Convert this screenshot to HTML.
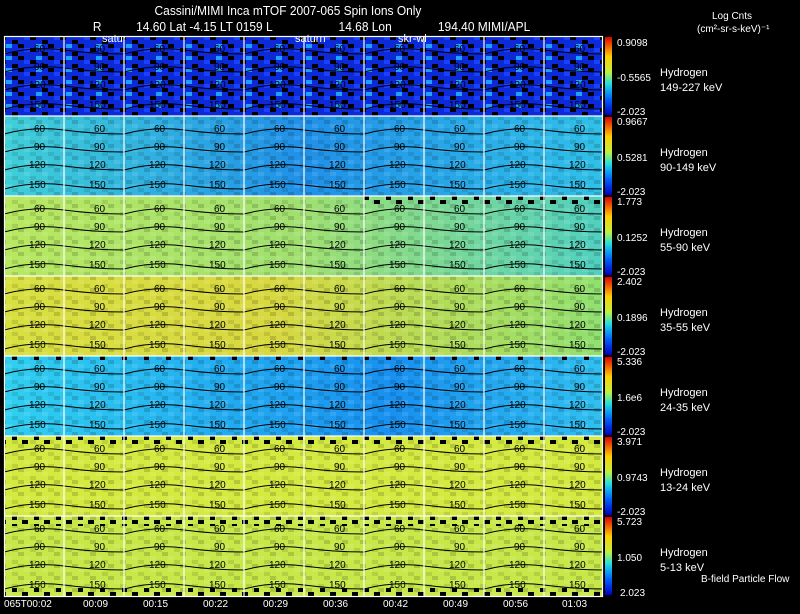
<!DOCTYPE html>
<html><head><meta charset="utf-8"><style>
body{margin:0;background:#000;width:800px;height:609px;overflow:hidden;font-family:"Liberation Sans",sans-serif}
</style></head><body>
<svg width="800" height="609" xmlns="http://www.w3.org/2000/svg" font-family="Liberation Sans, sans-serif">
<defs>
<linearGradient id="cb" x1="0" y1="0" x2="0" y2="1">
<stop offset="0" stop-color="#e00000"/><stop offset="0.25" stop-color="#ffd000"/><stop offset="0.45" stop-color="#c0f040"/><stop offset="0.6" stop-color="#20e0e0"/><stop offset="0.8" stop-color="#0060ff"/><stop offset="1" stop-color="#0000c0"/>
</linearGradient>
<linearGradient id="g3" x1="0" x2="1"><stop offset="0" stop-color="#b8e860"/><stop offset="0.5" stop-color="#a0e070"/><stop offset="1" stop-color="#50d0c0"/></linearGradient>
<linearGradient id="g4" x1="0" x2="1"><stop offset="0" stop-color="#d8e040"/><stop offset="0.45" stop-color="#d8d840"/><stop offset="1" stop-color="#90e070"/></linearGradient>
<linearGradient id="g2" x1="0" x2="1"><stop offset="0" stop-color="#40d0d8"/><stop offset="0.5" stop-color="#2090e8"/><stop offset="1" stop-color="#30c0e8"/></linearGradient>
<linearGradient id="g5" x1="0" x2="1"><stop offset="0" stop-color="#30d0f0"/><stop offset="0.65" stop-color="#1890f0"/><stop offset="1" stop-color="#30c0f0"/></linearGradient>
<pattern id="ct" x="4" y="36" width="120" height="80" patternUnits="userSpaceOnUse">
<g fill="none" stroke="#000" stroke-width="1"><path d="M0 18 Q30 10 60 14 T120 18"/><path d="M0 36 Q30 28 60 32 T120 36"/><path d="M0 54 Q30 46 60 50 T120 54"/><path d="M0 73 Q30 65 60 69 T120 73"/></g>
<g font-size="10" fill="#000"><text x="30" y="16">60</text><text x="30" y="34">90</text><text x="25" y="52">120</text><text x="25" y="72">150</text><text x="90" y="16">60</text><text x="90" y="34">90</text><text x="85" y="52">120</text><text x="85" y="72">150</text></g>
</pattern>
<pattern id="nz" width="18" height="12" patternUnits="userSpaceOnUse">
<rect x="0" y="0" width="6" height="4" fill="rgba(0,0,0,.15)"/><rect x="6" y="4" width="6" height="4" fill="rgba(255,255,255,.1)"/><rect x="12" y="8" width="6" height="4" fill="rgba(0,0,0,.1)"/>
</pattern>
<pattern id="bk" width="30" height="12" patternUnits="userSpaceOnUse">
<rect x="0" y="0" width="6" height="4" fill="#000"/><rect x="12" y="4" width="6" height="4" fill="#000"/><rect x="18" y="8" width="6" height="4" fill="#000"/><rect x="24" y="0" width="6" height="4" fill="#1840ff"/><rect x="6" y="8" width="6" height="4" fill="#20a0ff"/>
</pattern>
<pattern id="bt" width="22" height="8" patternUnits="userSpaceOnUse"><rect x="0" y="0" width="6" height="4" fill="#000"/><rect x="12" y="4" width="5" height="4" fill="#000"/></pattern>
</defs>
<g fill="#fff" font-size="13" transform="scale(0.92,1)">
<text x="168" y="15">Cassini/MIMI Inca mTOF  2007-065   Spin   Ions Only</text>
<text x="101" y="31">R</text><text x="148" y="31">14.60 Lat -4.15 LT 0159 L</text><text x="368" y="31">14.68 Lon</text><text x="476" y="31">194.40  MIMI/APL</text>
</g>
<g fill="#fff" font-size="10"><text x="712" y="19">Log Cnts</text><text x="697" y="32">(cm²-sr-s-keV)⁻¹</text></g>
<rect x="4" y="36" width="598" height="80" fill="#0c2ad8"/>
<rect x="4" y="36" width="598" height="80" fill="url(#bk)"/>
<rect x="4" y="116" width="598" height="80" fill="url(#g2)"/>
<rect x="4" y="196" width="598" height="80" fill="url(#g3)"/>
<rect x="4" y="276" width="598" height="80" fill="url(#g4)"/>
<rect x="4" y="356" width="598" height="80" fill="url(#g5)"/>
<rect x="4" y="436" width="598" height="80" fill="#d4ea40"/>
<rect x="4" y="516" width="598" height="80" fill="#c8e84a"/>
<rect x="4" y="116" width="598" height="80" fill="url(#nz)"/>
<rect x="4" y="196" width="598" height="400" fill="url(#nz)"/>
<rect x="364" y="196" width="238" height="8" fill="url(#bt)"/>
<rect x="4" y="356" width="598" height="4" fill="url(#bt)"/>
<rect x="4" y="436" width="598" height="8" fill="url(#bt)"/>
<rect x="4" y="516" width="598" height="10" fill="url(#bt)"/>
<rect x="4" y="588" width="598" height="8" fill="url(#bt)"/>
<rect x="4" y="36" width="598" height="560" fill="url(#ct)"/>
<g stroke="#fff" stroke-width="1.2" fill="none">
<rect x="4.5" y="36.5" width="598" height="560"/>
<path d="M64 36V596M124 36V596M184 36V596M244 36V596M304 36V596M364 36V596M424 36V596M484 36V596M544 36V596"/>
<path d="M4 116H602M4 196H602M4 276H602M4 356H602M4 436H602M4 516H602"/>
</g>
<g fill="#fff" font-size="11"><text x="102" y="42">satur</text><text x="295" y="42">saturn</text><text x="398" y="42">skr-wl</text></g>
<g fill="url(#cb)"><rect x="605" y="37" width="7" height="78"/><rect x="605" y="117" width="7" height="78"/><rect x="605" y="197" width="7" height="78"/><rect x="605" y="277" width="7" height="78"/><rect x="605" y="357" width="7" height="78"/><rect x="605" y="437" width="7" height="78"/><rect x="605" y="517" width="7" height="78"/></g>
<g fill="#fff" font-size="10">
<text x="617" y="46">0.9098</text><text x="617" y="81">-0.5565</text><text x="617" y="115">-2.023</text>
<text x="617" y="125">0.9667</text><text x="617" y="161">0.5281</text><text x="617" y="195">-2.023</text>
<text x="617" y="205">1.773</text><text x="617" y="241">0.1252</text><text x="617" y="275">-2.023</text>
<text x="617" y="285">2.402</text><text x="617" y="321">0.1896</text><text x="617" y="355">-2.023</text>
<text x="617" y="365">5.336</text><text x="617" y="401">1.6e6</text><text x="617" y="435">-2.023</text>
<text x="617" y="445">3.971</text><text x="617" y="481">0.9743</text><text x="617" y="515">-2.023</text>
<text x="617" y="525">5.723</text><text x="617" y="561">1.050</text><text x="620" y="596">2.023</text>
</g>
<g fill="#fff" font-size="11">
<text x="660" y="76">Hydrogen</text><text x="660" y="91">149-227 keV</text>
<text x="660" y="156">Hydrogen</text><text x="660" y="171">90-149 keV</text>
<text x="660" y="236">Hydrogen</text><text x="660" y="251">55-90 keV</text>
<text x="660" y="316">Hydrogen</text><text x="660" y="331">35-55 keV</text>
<text x="660" y="396">Hydrogen</text><text x="660" y="411">24-35 keV</text>
<text x="660" y="476">Hydrogen</text><text x="660" y="491">13-24 keV</text>
<text x="660" y="556">Hydrogen</text><text x="660" y="571">5-13 keV</text>
<text x="701" y="582" font-size="10">B-field Particle Flow</text>
</g>
<g fill="#fff" font-size="10">
<text x="4" y="607">065T00:02</text><text x="83" y="607">00:09</text><text x="143" y="607">00:15</text><text x="203" y="607">00:22</text><text x="263" y="607">00:29</text><text x="323" y="607">00:36</text><text x="383" y="607">00:42</text><text x="443" y="607">00:49</text><text x="503" y="607">00:56</text><text x="562" y="607">01:03</text>
</g>
</svg>
</body></html>
